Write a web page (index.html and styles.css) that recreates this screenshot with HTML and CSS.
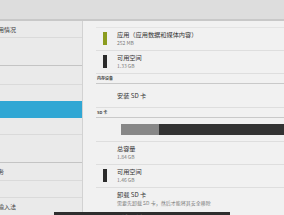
FILE: index.html
```html
<!DOCTYPE html>
<html lang="zh-CN">
<head>
<meta charset="utf-8">
<link rel="stylesheet" href="styles.css">
</head>
<body>
<div class="screen">
  <div class="topbar"></div>
  <div class="main">
    <div class="left">
      <div class="litem h17">流量使用情况</div>
      <div class="litem h28 head">更多…</div>
      <div class="litem h19">声音</div>
      <div class="litem h16 noline">显示</div>
      <div class="litem h17 active">存储</div>
      <div class="litem h17">电池</div>
      <div class="litem h28 head">应用</div>
      <div class="litem h18">位置服务</div>
      <div class="litem h17">安全</div>
      <div class="litem h17 noline">语言和输入法</div>
    </div>
    <div class="right">
      <div class="list">
        <div class="row">
          <span class="swatch green"></span>
          <div class="txt">
            <div class="title">应用（应用数据和媒体内容）</div>
            <div class="sub">252 MB</div>
          </div>
        </div>
        <div class="row">
          <span class="swatch black"></span>
          <div class="txt">
            <div class="title">可用空间</div>
            <div class="sub">1.33 GB</div>
          </div>
        </div>
        <div class="cat">内存设备</div>
        <div class="row single tall">
          <div class="txt"><div class="title">安装 SD 卡</div></div>
        </div>
        <div class="cat">SD 卡</div>
        <div class="row barrow tall">
          <div class="bar"><div class="used" style="width:38px"></div></div>
        </div>
        <div class="row">
          <div class="txt">
            <div class="title">总容量</div>
            <div class="sub">1.84 GB</div>
          </div>
        </div>
        <div class="row">
          <span class="swatch black"></span>
          <div class="txt">
            <div class="title">可用空间</div>
            <div class="sub">1.46 GB</div>
          </div>
        </div>
        <div class="row noline">
          <div class="txt">
            <div class="title">卸载 SD 卡</div>
            <div class="sub">需要先卸载 SD 卡，然后才能将其安全移除</div>
          </div>
        </div>
      </div>
    </div>
  </div>
  <div class="toast"><span>USB 调试已连接</span></div>
</div>
</body>
</html>
```
FILE: styles.css
```css
* { box-sizing: border-box; }
html, body { margin: 0; padding: 0; }
body {
  width: 284px;
  height: 215px;
  overflow: hidden;
  background: #f1f1f1;
  font-family: "Noto Sans CJK SC", "Liberation Sans", sans-serif;
  color: #333;
}
.screen {
  position: relative;
  width: 284px;
  height: 215px;
  overflow: hidden;
}
.topbar {
  height: 21px;
  background: #dddddd;
  border-bottom: 2px solid #c8c8c8;
}
.main {
  display: flex;
  height: 194px;
}
.left {
  width: 83px;
  background: #eaeaea;
  border-right: 1px solid #d2d2d2;
  overflow: hidden;
}
.litem {
  font-size: 6px;
  color: #3a3a3a;
  text-indent: -20px;
  white-space: nowrap;
  display: flex;
  align-items: center;
  border-bottom: 1px solid #dadada;
}
.litem.head { border-bottom: 1px solid #c4c4c4; align-items: flex-start; padding-top: 5px; }
.litem.noline { border-bottom: none; }
.litem.h16 { height: 16px; }
.litem.h17 { height: 17px; }
.litem.h18 { height: 18px; }
.litem.h19 { height: 19px; }
.litem.h28 { height: 28px; }
.litem.active {
  background: #30a7d4;
  border-bottom: none;
  color: #fff;
}
.right {
  flex: 1;
  padding: 6px 0 0 13px;
  overflow: hidden;
}
.list {
  border-top: 1px solid #e4e4e4;
}
.row {
  display: flex;
  height: 23px;
  padding: 3px 0 0 7px;
  border-bottom: 1px solid #dedede;
}
.row.tall { height: 24px; }
.row.noline { border-bottom: none; }
.row.single { align-items: center; padding-top: 0; }
.swatch {
  width: 4px;
  height: 13px;
  margin-top: 1px;
  flex: none;
}
.swatch.green { background: #8b9c1f; }
.swatch.black { background: #2b2b2b; }
.txt {
  padding-left: 14px;
}
.swatch + .txt { padding-left: 10px; }
.title {
  font-size: 6.2px;
  line-height: 7px;
  color: #333;
  white-space: nowrap;
}
.sub {
  font-size: 5px;
  line-height: 8px;
  margin-top: 1px;
  color: #7a7a7a;
  white-space: nowrap;
}
.cat {
  height: 10px;
  font-size: 4px;
  line-height: 9px;
  padding-left: 1px;
  color: #444;
  font-weight: bold;
  border-bottom: 1px solid #c9c9c9;
}
.barrow {
  align-items: center;
  padding: 0 0 0 25px;
}
.bar {
  flex: 1;
  height: 11px;
  background: #333333;
  display: flex;
}
.used {
  height: 100%;
  background: #878787;
}
.toast {
  position: absolute;
  left: 54px;
  top: 212px;
  width: 176px;
  height: 20px;
  background: #2e2e2e;
  font-size: 6px;
  color: #eee;
  padding: 1px 0 0 49px;
  white-space: nowrap;
}
```
